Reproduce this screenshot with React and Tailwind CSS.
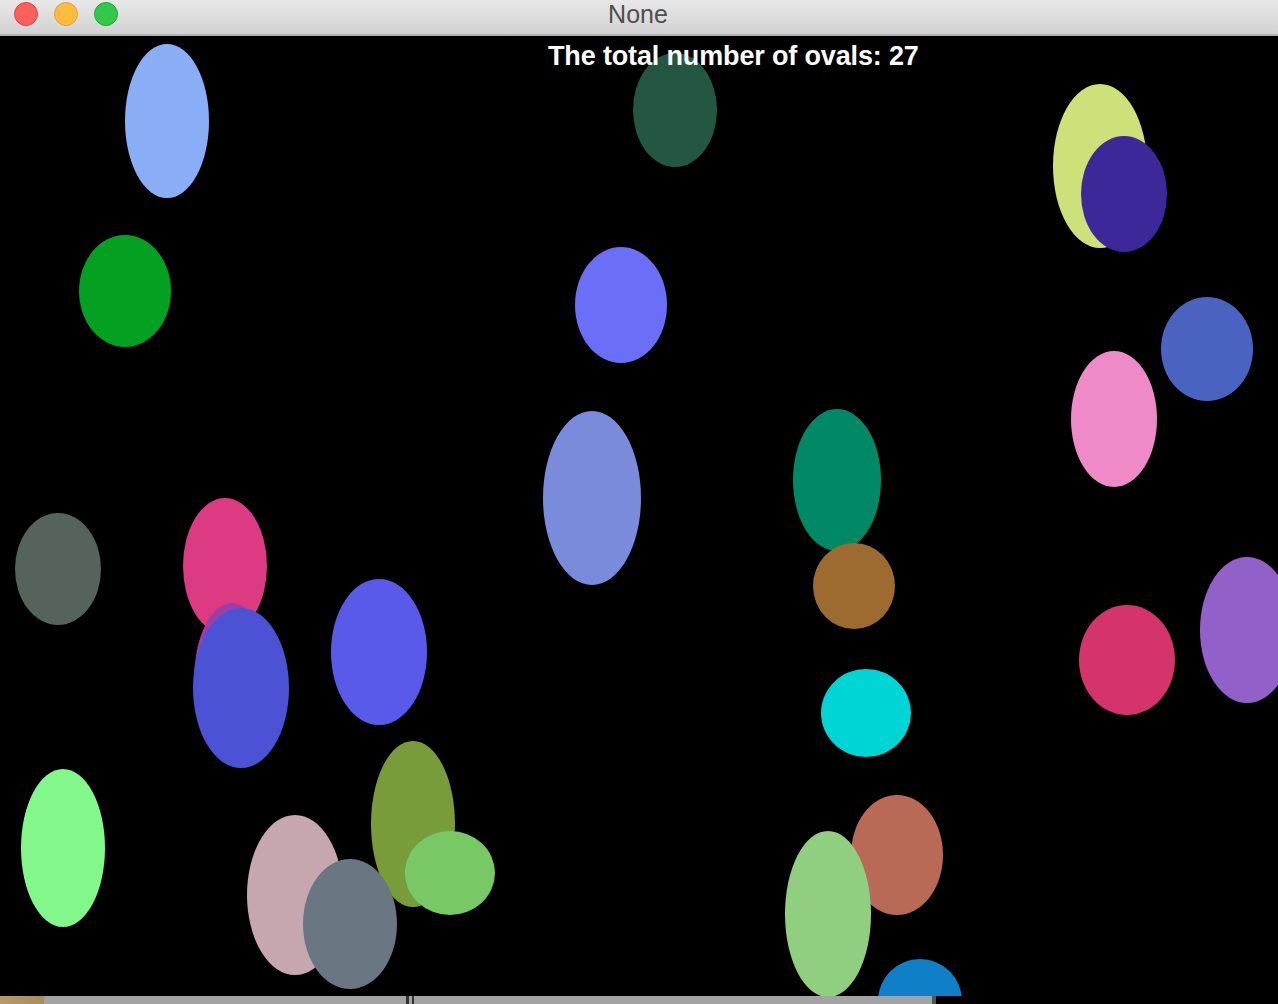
import React from 'react';

// ovals drawn in page coordinates, canvas starts at y=36
const ovals = [
  { cx: 167, cy: 121, rx: 42, ry: 77, fill: '#8aaef5' },
  { cx: 675, cy: 110, rx: 42, ry: 57, fill: '#245742' },
  { cx: 1100, cy: 166, rx: 47, ry: 82, fill: '#cde07a' },
  { cx: 1124, cy: 194, rx: 43, ry: 58, fill: '#3c2899' },
  { cx: 125, cy: 291, rx: 46, ry: 56, fill: '#03a021' },
  { cx: 621, cy: 305, rx: 46, ry: 58, fill: '#6b6ef7' },
  { cx: 1207, cy: 349, rx: 46, ry: 52, fill: '#4b63c0' },
  { cx: 1114, cy: 419, rx: 43, ry: 68, fill: '#ed8ac7' },
  { cx: 592, cy: 498, rx: 49, ry: 87, fill: '#7b8bdb' },
  { cx: 837, cy: 480, rx: 44, ry: 71, fill: '#008964' },
  { cx: 58, cy: 569, rx: 43, ry: 56, fill: '#56625c' },
  { cx: 225, cy: 566, rx: 42, ry: 68, fill: '#dc3a82' },
  { cx: 232, cy: 680, rx: 38, ry: 77, fill: '#9a3fa8' },
  { cx: 241, cy: 688, rx: 48, ry: 80, fill: '#4b52d4' },
  { cx: 854, cy: 586, rx: 41, ry: 43, fill: '#9d6a2f' },
  { cx: 379, cy: 652, rx: 48, ry: 73, fill: '#5a5aea' },
  { cx: 1127, cy: 660, rx: 48, ry: 55, fill: '#d5336b' },
  { cx: 1247, cy: 630, rx: 47, ry: 73, fill: '#9160c8' },
  { cx: 866, cy: 713, rx: 45, ry: 44, fill: '#00d5d5' },
  { cx: 63, cy: 848, rx: 42, ry: 79, fill: '#82f78a' },
  { cx: 413, cy: 824, rx: 42, ry: 83, fill: '#789c3a' },
  { cx: 295, cy: 895, rx: 48, ry: 80, fill: '#c6a7b0' },
  { cx: 350, cy: 924, rx: 47, ry: 65, fill: '#6a7682' },
  { cx: 450, cy: 873, rx: 45, ry: 42, fill: '#79c866' },
  { cx: 897, cy: 855, rx: 46, ry: 60, fill: '#b86a56' },
  { cx: 828, cy: 914, rx: 43, ry: 83, fill: '#91cf80' },
  { cx: 920, cy: 1001, rx: 42, ry: 42, fill: '#0f7fc7' },
];

function TitleBar() {
  return (
    <div className="relative flex h-[36px] shrink-0 items-center justify-center border-b-2 border-[#b3b3b3] bg-gradient-to-b from-[#e8e8e8] to-[#d2d2d2]">
      <div className="absolute left-[14px] top-[2px] flex gap-[16px]">
        <span className="h-[24px] w-[24px] rounded-full border border-[#e0443e] bg-[#fc605c]" />
        <span className="h-[24px] w-[24px] rounded-full border border-[#dea236] bg-[#fdbc40]" />
        <span className="h-[24px] w-[24px] rounded-full border border-[#1aab29] bg-[#34c84a]" />
      </div>
      <span className="-mt-[6px] ml-[-2px] font-['Liberation_Sans',sans-serif] text-[25px] leading-none text-[#4f4f4f]">None</span>
    </div>
  );
}

export default function App() {
  return (
    <div className="flex h-[1004px] w-[1278px] flex-col overflow-hidden bg-black">
      <TitleBar />
      <div className="relative h-[960px] w-full shrink-0 overflow-hidden bg-black">
        <svg width="1278" height="960" className="block">
          <g transform="translate(0,-36)">
            {ovals.map((o, i) => (
              <ellipse key={i} cx={o.cx} cy={o.cy} rx={o.rx} ry={o.ry} fill={o.fill} />
            ))}
          </g>
        </svg>
        <div className="absolute left-[548px] top-[7px] font-['Liberation_Sans',sans-serif] text-[27px] font-bold leading-none tracking-[-0.15px] text-white">
          The total number of ovals: 27
        </div>
      </div>
      <div className="flex h-[8px] w-full shrink-0">
        <div className="w-[44px] bg-gradient-to-r from-[#b89a6a] to-[#a88d60]" />
        <div className="w-[362px] bg-[#a3a3a3]" />
        <div className="w-[3px] bg-[#333333]" />
        <div className="w-[3px] bg-[#a3a3a3]" />
        <div className="w-[2px] bg-[#333333]" />
        <div className="w-[518px] bg-[#a3a3a3]" />
        <div className="w-[4px] bg-[#555555]" />
        <div className="flex-1 bg-black" />
      </div>
    </div>
  );
}
